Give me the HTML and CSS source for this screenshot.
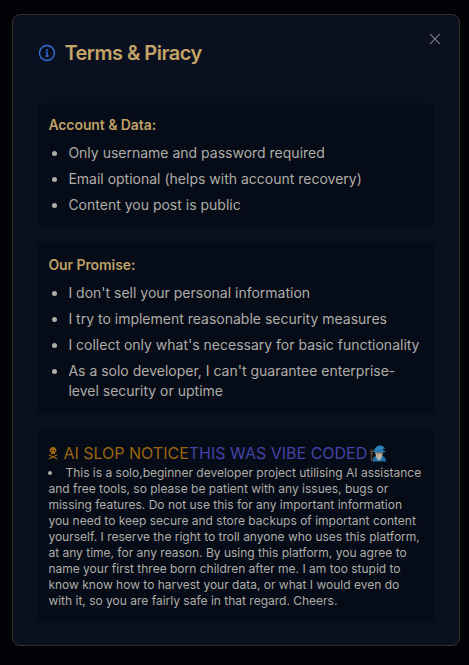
FILE: index.html
```html
<!DOCTYPE html>
<html lang="en">
<head>
    <meta charset="UTF-8">
    <title>Terms &amp; Piracy</title>
    <link rel="stylesheet" href="styles.css">
</head>

<body>
    <div class="modal">
        <button class="close" aria-label="Close">
            <svg width="12" height="12" viewBox="0 0 12 12">
                <path d="M1.2 1.2l9.6 9.6M10.8 1.2l-9.6 9.6" />
            </svg>
        </button>

        <header class="modal-head">
            <svg class="info" width="18" height="18" viewBox="0 0 18 18">
                <circle cx="9" cy="9" r="7.5" />
                <path d="M7.7 8.4h1.5v3.3M7.6 12h3" />
                <circle class="dot" cx="9.1" cy="6" r=".9" />
            </svg>
            <h1>Terms &amp; Piracy</h1>
        </header>

        <section class="card">
            <h2>Account &amp; Data:</h2>
            <ul>
                <li>Only username and password required</li>
                <li>Email optional (helps with account recovery)</li>
                <li>Content you post is public</li>
            </ul>
        </section>

        <section class="card">
            <h2>Our Promise:</h2>
            <ul>
                <li>I don't sell your personal information</li>
                <li>I try to implement reasonable security measures</li>
                <li>I collect only what's necessary for basic functionality</li>
                <li>As a solo developer, I can't guarantee enterprise-level security or uptime</li>
            </ul>
        </section>

        <section class="card">
            <div class="notice">
                <svg class="skull" width="10" height="14" viewBox="0 0 10 14">
                    <path class="fill" fill-rule="evenodd" d="M5 1C2.8 1 1.6 2.3 1.6 4.2c0 1.3.5 2 1.4 2.4V8h4V6.600c.9-.4 1.400-1.100 1.400-2.400C8.400 2.300 7.200 1 5 1zM3.200 4.200h1v1h-1zM5.800 4.200h1v1h-1z" />
                    <path d="M.8 8.800l8.400 4.200M9.200 8.800L.8 13" />
                </svg>
                <span class="slop">AI SLOP NOTICE</span><span class="vibe">THIS WAS VIBE CODED</span>
                <svg class="wizard" width="17" height="17" viewBox="0 0 17 17">
                    <path d="M1.5 4v12" stroke="#60402c" stroke-width="1.5" />
                    <path d="M.5 6.5h2.5M.5 8.500h2.500" stroke="#70462c" stroke-width="1.2" />
                    <path fill="#2470a5" d="M2.500 16.500c0-4 2-6 6.500-6s7 2 7 6z" />
                    <circle cx="9" cy="8.300" r="3.600" fill="#b99a6c" />
                    <path fill="#b4b3ac" d="M5.800 8.900c1 .9 2 .6 3.200.6s2.200.3 3.200-.6c.3 3.100-1.200 5.200-3.200 6.800-2-1.600-3.500-3.700-3.200-6.800z" />
                    <path fill="#2980b8" d="M2.600 6.700C5 4.900 5.200 1.200 8.700.7c3.200-.5 5.900 1 6.200 3.500l-2.200-.8c-.1 1.300 1.200 2.200 3.500 3.200-3.700 1.500-10 1.600-13.600.1z" />
                    <path d="M4.800 5.600c2.600.8 5.600.7 8.200-.1" stroke="#1c5c8d" stroke-width=".7" fill="none" />
                    <path d="M7.100 8h.8M10.100 8h.8" stroke="#35261c" stroke-width=".8" />
                </svg>
            </div>
            <ul class="small">
                <li>This is a solo,beginner developer project utilising AI assistance and free tools, so please be patient with any issues, bugs or missing features. Do not use this for any important information you need to keep secure and store backups of important content yourself. I reserve the right to troll anyone who uses this platform, at any time, for any reason. By using this platform, you agree to name your first three born children after me. I am too stupid to know know how to harvest your data, or what I would even do with it, so you are fairly safe in that regard. Cheers.</li>
            </ul>
        </section>
    </div>
</body>
</html>
```

FILE: styles.css
```css
* {
    box-sizing: border-box;
}

body {
    margin: 0;
    height: 665px;
    padding: 14px 9px 0 12px;
    background: #020306;
    color: #b0ada8;
    font: 14px/20px Inter, "Liberation Sans", sans-serif;
    overflow: hidden;
}

h1,
h2,
ul {
    margin: 0;
    padding: 0;
}

.modal {
    position: relative;
    height: 632px;
    padding: 24px;
    border: 1px solid #352d28;
    border-radius: 8px;
    background: #0a1020;
}

/* close button sits over the corner */
.close {
    position: absolute;
    top: 18px;
    right: 18px;
    width: 12px;
    height: 12px;
    padding: 0;
    border: 0;
    background: none;
}

.close svg {
    display: block;
    fill: none;
    stroke: #858585;
    stroke-width: 1.1;
}

.modal-head {
    display: flex;
    align-items: center;
    gap: 8.4px;
    height: 28px;
    margin-bottom: 36px;
    padding-left: 1px;
}

.info {
    fill: none;
    stroke: #3674df;
    stroke-width: 1.3;
}

.info .dot {
    fill: #3674df;
    stroke: none;
}

h1 {
    color: #c4a567;
    font-size: 20px;
    font-weight: 600;
    line-height: 28px;
    letter-spacing: -.5px;
}

.card {
    margin-bottom: 16px;
    padding: 12px 12px 12px 11.4px;
    border-radius: 6px;
    background: #050b17;
}

h2 {
    margin-bottom: 8px;
    color: #bfa065;
    font-size: 14px;
    font-weight: 600;
    line-height: 20px;
    letter-spacing: -.08px;
}

ul {
    padding-left: 20px;
}

li + li {
    margin-top: 6px;
}

.notice {
    display: flex;
    align-items: center;
    height: 24px;
    font-size: 16px;
    white-space: nowrap;
}

.skull {
    margin-right: 5px;
    fill: none;
    stroke: #9c6510;
    stroke-width: 1.2;
}

.skull .fill {
    fill: #9c6510;
    stroke: none;
}

.slop {
    color: #9c6510;
}

.vibe {
    color: #4543a6;
}

.wizard {
    margin-left: 2.5px;
}

.small {
    padding: 0;
    font-size: 12px;
    line-height: 16px;
    list-style-position: inside;
}
```
